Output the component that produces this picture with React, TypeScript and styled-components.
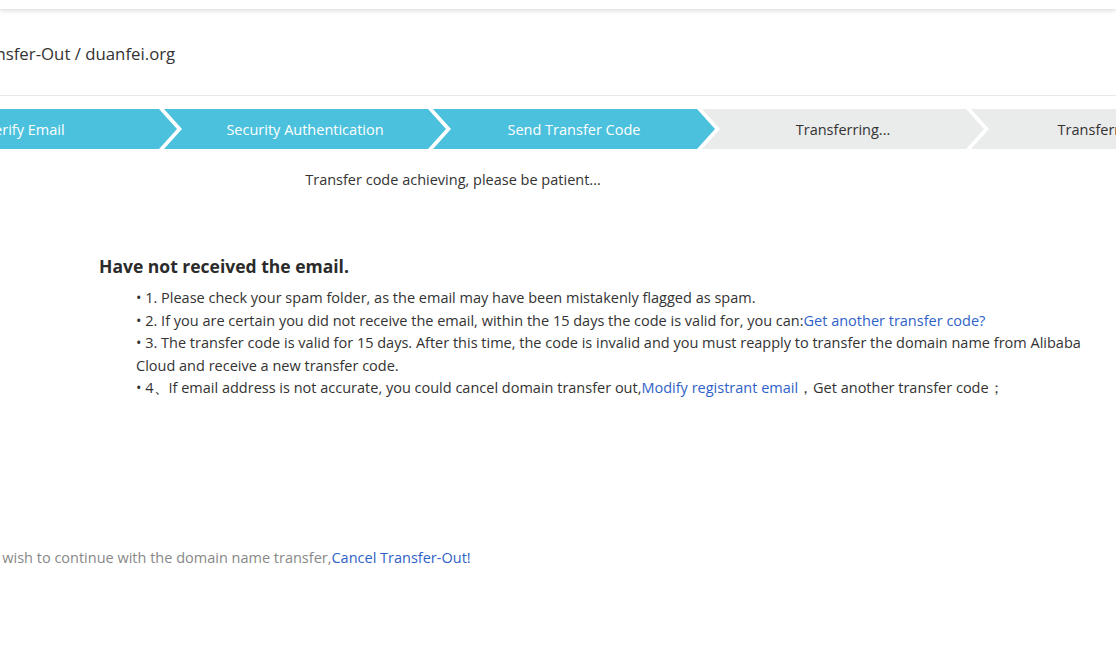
import React from "react";
import styled, { createGlobalStyle } from "styled-components";

const Global = createGlobalStyle`
  html, body { margin: 0; padding: 0; background: #fff; overflow: hidden; }
  body { font-family: "Open Sans", "Noto Sans", sans-serif; color: #333; }
  * { box-sizing: border-box; }
`;

const Viewport = styled.div`
  width: 100vw;
  height: 100vh;
  overflow: hidden;
  position: relative;
`;

const TopBar = styled.div`
  height: 9px;
  background: #fff;
  box-shadow: 0 2px 4px rgba(0, 0, 0, 0.13);
  position: relative;
  z-index: 1;
`;

const Page = styled.div`
  margin-left: -105px;
  width: 1400px;
`;

const TitleRow = styled.div`
  height: 87px;
  display: flex;
  align-items: center;
  padding-left: 75px;
  padding-top: 2px;
  border-bottom: 1px solid #e8e8e8;
  font-size: 16.8px;
  color: #333;
`;

const Steps = styled.div`
  display: flex;
  margin-top: 13px;
  height: 40px;
`;

const Step = styled.div<{ $active: boolean }>`
  flex: 0 0 282px;
  height: 40px;
  margin-right: -13px;
  display: flex;
  align-items: center;
  justify-content: center;
  font-size: 14.5px;
  white-space: nowrap;
  background: ${(p) => (p.$active ? "#4bc1dd" : "#eaebeb")};
  color: ${(p) => (p.$active ? "#fff" : "#333")};
  clip-path: polygon(0 0, calc(100% - 18px) 0, 100% 50%, calc(100% - 18px) 100%, 0 100%, 18px 50%);

  &:first-child {
    padding-right: 22px;
  }
`;

const Pending = styled.div`
  width: 1116px;
  margin-top: 21px;
  line-height: 20px;
  font-size: 14.5px;
  text-align: center;
`;

const Help = styled.div`
  margin-top: 64px;
  padding-left: 204px;
`;

const Heading = styled.h3`
  margin: 0;
  font-size: 17.5px;
  font-weight: 700;
  line-height: 24px;
  color: #2b2b2b;
`;

const List = styled.ul`
  list-style: none;
  margin: 9px 0 0;
  padding: 0 0 0 37px;
  width: 1000px;
  font-size: 14.5px;
  line-height: 22.5px;
`;

const Link = styled.a`
  color: #2f62c8;
  text-decoration: none;
  cursor: pointer;
`;

const Footer = styled.div`
  margin-top: 148px;
  padding-left: 18px;
  font-size: 14.5px;
  line-height: 20px;
  color: #888;
`;

const steps = [
  { label: "Verify Email", active: true },
  { label: "Security Authentication", active: true },
  { label: "Send Transfer Code", active: true },
  { label: "Transferring...", active: false },
  { label: "Transferred Out", active: false },
];

export default function App() {
  return (
    <Viewport>
      <Global />
      <TopBar />
      <Page>
        <TitleRow>Transfer-Out / duanfei.org</TitleRow>
        <Steps>
          {steps.map((s) => (
            <Step key={s.label} $active={s.active}>
              {s.label}
            </Step>
          ))}
        </Steps>
        <Pending>Transfer code achieving, please be patient...</Pending>
        <Help>
          <Heading>Have not received the email.</Heading>
          <List>
            <li>• 1. Please check your spam folder, as the email may have been mistakenly flagged as spam.</li>
            <li>
              • 2. If you are certain you did not receive the email, within the 15 days the code is valid for, you can:
              <Link>Get another transfer code?</Link>
            </li>
            <li>
              • 3. The transfer code is valid for 15 days. After this time, the code is invalid and you must reapply to
              transfer the domain name from Alibaba Cloud and receive a new transfer code.
            </li>
            <li>
              • 4、If email address is not accurate, you could cancel domain transfer out,
              <Link>Modify registrant email</Link>，Get another transfer code；
            </li>
          </List>
        </Help>
        <Footer>
          If you do not wish to continue with the domain name transfer,<Link>Cancel Transfer-Out!</Link>
        </Footer>
      </Page>
    </Viewport>
  );
}
